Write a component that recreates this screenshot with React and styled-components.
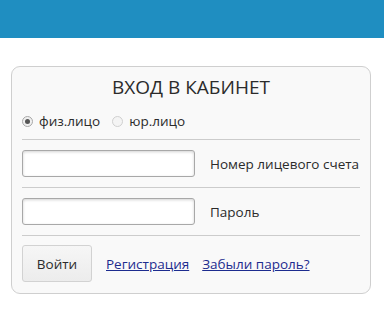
import React, { useState } from "react";
import styled, { createGlobalStyle } from "styled-components";

const GlobalStyle = createGlobalStyle`
  body {
    margin: 0;
    background: #fff;
    font-family: "Open Sans", "Liberation Sans", sans-serif;
    color: #2b2b2b;
  }
`;

const TopBar = styled.div`
  height: 38px;
  background: #1f8ec1;
`;

const Panel = styled.form`
  box-sizing: border-box;
  width: 360px;
  margin: 28px 0 0 11px;
  padding: 0 10px 11px;
  background: #f9f9f9;
  border: 1px solid #cfcfcf;
  border-radius: 9px;
`;

const Title = styled.h2`
  margin: 0;
  padding-top: 8px;
  font-size: 19px;
  font-weight: 400;
  line-height: 24px;
  text-align: center;
  color: #2b2b2b;
`;

const RadioRow = styled.div`
  display: flex;
  align-items: center;
  gap: 12px;
  height: 22px;
  margin: 11px 0 7px;
`;

const RadioLabel = styled.label`
  display: flex;
  align-items: center;
  gap: 6px;
  font-size: 13.5px;
  color: #2b2b2b;
  cursor: pointer;
`;

const RadioDot = styled.span`
  box-sizing: border-box;
  width: 11px;
  height: 11px;
  border-radius: 50%;
  border: 1px solid ${p => (p.checked ? "#a8a8a8" : "#d0d0d0")};
  background: ${p => (p.checked ? "#f0f0f0" : "#f4f4f4")};
  display: flex;
  align-items: center;
  justify-content: center;

  &::after {
    content: "";
    width: 5px;
    height: 5px;
    border-radius: 50%;
    background: ${p => (p.checked ? "#555" : "transparent")};
  }
`;

const Row = styled.div`
  display: flex;
  align-items: center;
  gap: 15px;
  border-top: 1px solid #cccccc;
  padding: 10px 0;
`;

const Input = styled.input`
  box-sizing: border-box;
  width: 173px;
  height: 27px;
  margin: 0;
  border: 1px solid #a8a8a8;
  border-radius: 3px;
  background: #fff;
  box-shadow: inset 0 1px 3px rgba(0, 0, 0, 0.18);
  font: inherit;
  font-size: 13px;
  padding: 0 5px;
  outline: none;
`;

const FieldLabel = styled.span`
  font-size: 13.5px;
  color: #2b2b2b;
`;

const ActionRow = styled.div`
  display: flex;
  align-items: center;
  gap: 13px;
  border-top: 1px solid #cccccc;
  padding-top: 9px;
`;

const Button = styled.button`
  box-sizing: border-box;
  width: 70px;
  height: 37px;
  margin: 0 1px 0 0;
  border: 1px solid #d2d2d2;
  border-radius: 3px;
  background: linear-gradient(#f6f6f6, #ececec);
  font-family: inherit;
  font-size: 13.5px;
  color: #2b2b2b;
  cursor: pointer;
`;

const Link = styled.a`
  font-size: 13.5px;
  color: #1d2c8f;
  text-decoration: underline;
  cursor: pointer;
`;

export default function App() {
  const [kind, setKind] = useState("fiz");

  return (
    <>
      <GlobalStyle />
      <TopBar />
      <Panel onSubmit={e => e.preventDefault()}>
        <Title>ВХОД В КАБИНЕТ</Title>
        <RadioRow>
          <RadioLabel onClick={() => setKind("fiz")}>
            <RadioDot checked={kind === "fiz"} />
            физ.лицо
          </RadioLabel>
          <RadioLabel onClick={() => setKind("yur")}>
            <RadioDot checked={kind === "yur"} />
            юр.лицо
          </RadioLabel>
        </RadioRow>
        <Row>
          <Input type="text" />
          <FieldLabel>Номер лицевого счета</FieldLabel>
        </Row>
        <Row>
          <Input type="password" />
          <FieldLabel>Пароль</FieldLabel>
        </Row>
        <ActionRow>
          <Button type="submit">Войти</Button>
          <Link>Регистрация</Link>
          <Link>Забыли пароль?</Link>
        </ActionRow>
      </Panel>
    </>
  );
}
